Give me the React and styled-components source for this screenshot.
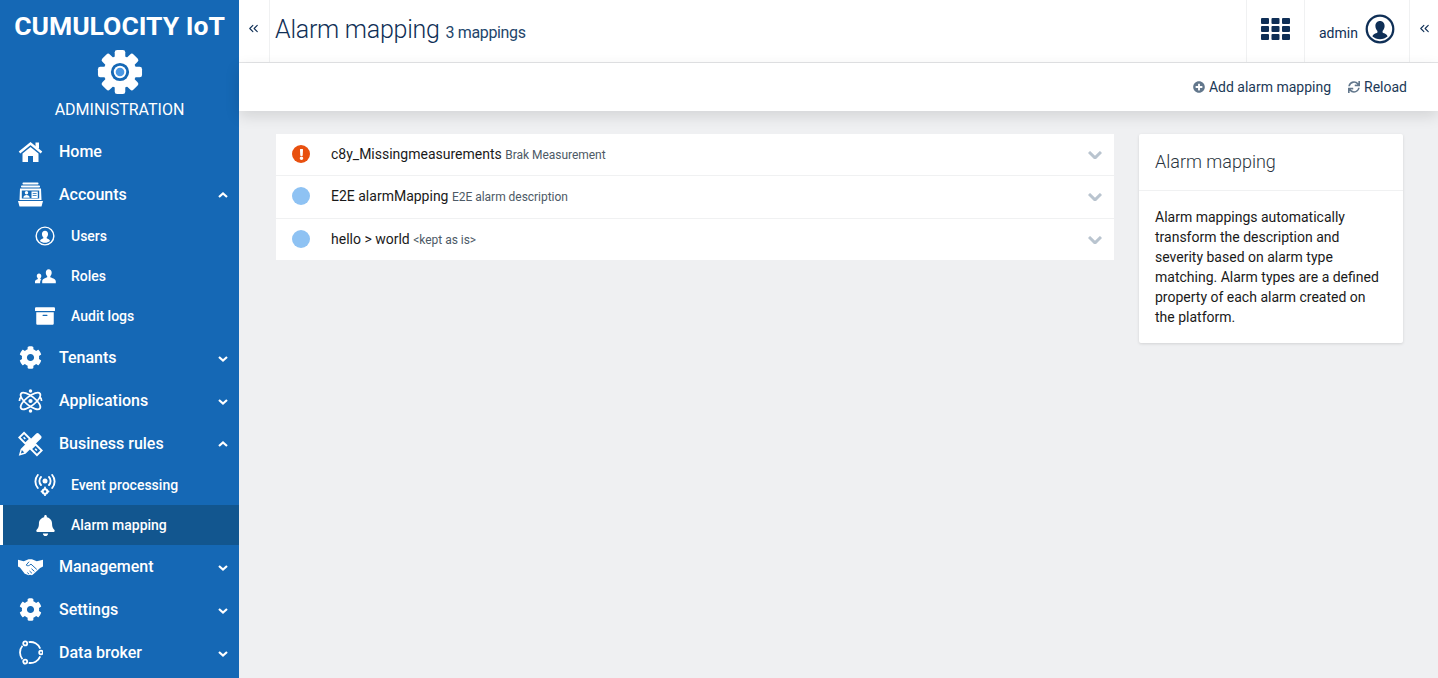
import React from 'react'
import styled, { createGlobalStyle } from 'styled-components'
import { FaCog, FaBell, FaArchive, FaPlusCircle, FaSync, FaExclamation } from 'react-icons/fa'
import { ChevronsLeft } from 'lucide-react'

const GlobalStyle = createGlobalStyle`
  html, body { margin: 0; padding: 0; height: 100%; overflow: hidden; }
  body { font-family: Roboto, "Liberation Sans", sans-serif; background: #eff0f2; }
  * { box-sizing: border-box; }
`

// hand drawn icons, the packages don't have these
const LogoGear = () => (
  <svg width="46" height="46" viewBox="0 0 48 48">
    {[0, 45, 90, 135, 180, 225, 270, 315].map((a) => (
      <rect key={a} x="18.5" y="1" width="11" height="12" rx="2.5" fill="#fff" transform={`rotate(${a} 24 24)`} />
    ))}
    <circle cx="24" cy="24" r="17" fill="#fff" />
    <circle cx="24" cy="24" r="9.5" fill="#1568b5" />
    <circle cx="24" cy="24" r="6.5" fill="#fff" />
    <circle cx="24" cy="24" r="4.5" fill="#4a98e4" />
  </svg>
)

const Chevron = ({ width = 10, weight = 2.2, up }) => {
  const h = width * 0.6
  const points = up
    ? `M1 ${h - 1}L${width / 2} 1.500L${width - 1} ${h - 1}`
    : `M1 1L${width / 2} ${h - 1.500}L${width - 1} 1`
  return (
    <svg width={width} height={h} viewBox={`0 0 ${width} ${h}`} fill="none" stroke="currentColor" strokeWidth={weight}>
      <path d={points} />
    </svg>
  )
}

const HomeIcon = () => (
  <svg width="25" height="22" viewBox="0 0 25 22" fill="#fff">
    <rect x="17.5" y="1.5" width="3.5" height="6" />
    <path d="M1.5 11.5l11-9 11 9" fill="none" stroke="#fff" strokeWidth="2.4" />
    <path d="M4.5 12.500l8-6.500 8 6.500V21h-5.500v-6h-5v6H4.500z" />
  </svg>
)

const AccountsIcon = () => (
  <svg width="25" height="25" viewBox="0 0 25 25" fill="#fff">
    <rect x="4.500" y="0.500" width="16" height="2" rx="0.800" />
    <rect x="3" y="3.500" width="19" height="2" rx="0.800" />
    <path fillRule="evenodd" d="M2 6.500h21l.5 11.500H1.500zM3.800 8.500v8h17.400v-8z" />
    <circle cx="8.500" cy="10.800" r="1.700" />
    <path d="M5.300 15.800c.1-2 1.500-2.800 3.200-2.800s3.100.8 3.200 2.800z" />
    <path fillRule="evenodd" d="M13.500 9.500h6.300v6.500h-6.300zM14.700 11v.8h3.900V11zm0 2v.8h3.900V13z" />
    <path d="M0 19h25l-1.500 5.500h-22z" />
  </svg>
)

const AtomIcon = () => (
  <svg width="26" height="26" viewBox="0 0 26 26" fill="none" stroke="#fff" strokeWidth="1.800">
    <ellipse cx="13" cy="13" rx="12.500" ry="4.800" transform="rotate(38 13 13)" />
    <ellipse cx="13" cy="13" rx="12.500" ry="4.800" transform="rotate(-38 13 13)" />
    <path d="M1.500 13c0-1.500.5-3 1.500-4M24.500 13c0-1.500-.5-3-1.500-4" />
    <circle cx="13" cy="13" r="2.200" fill="#fff" stroke="none" />
    <circle cx="13" cy="2.500" r="1.800" fill="#fff" stroke="none" />
    <circle cx="13" cy="23.500" r="1.800" fill="#fff" stroke="none" />
  </svg>
)

const BusinessIcon = () => (
  <svg width="26" height="26" viewBox="0 0 26 26" fill="#fff">
    <g fill="none" stroke="#fff" strokeWidth="2">
      <rect x="2.500" y="3.500" width="9" height="7" transform="rotate(45 7 7)" />
      <rect x="14.500" y="15.500" width="9" height="7" transform="rotate(45 19 19)" />
    </g>
    <rect x="5.500" y="6.300" width="2.500" height="1.600" transform="rotate(45 7 7)" />
    <rect x="17.500" y="18.300" width="2.500" height="1.600" transform="rotate(45 19 19)" />
    <path d="M.8 25.200l2-7L19 2.200c.8-.8 1.800-.8 2.500 0l2.500 2.500c.7.700.7 1.700 0 2.500L7.800 23.200z" />
    <path d="M3 22.800l1-3.500 2.500 2.500z" fill="#1568b5" />
  </svg>
)

const HandshakeIcon = () => (
  <svg width="26" height="18" viewBox="0 0 26 18">
    <path
      fill="#fff"
      d="M0 1.500l6 1.500 5-2h3.500l5 2 6.500-1.500v7l-3 1.500-6.500 6-2 1.500-2-.5-1.500.5-2.500-1-1.500-.5-2-2.500-3-4-2-1z"
    />
    <path
      fill="none"
      stroke="#1568b5"
      strokeWidth="1"
      d="M11.500 3.500L8.500 7c1.500 1.200 3 .8 5-1l6 5.500M17 13.500l-3-2.700M14.500 15.500l-2.500-2.300M11.500 16.500l-1.800-1.700"
    />
  </svg>
)

const UserCircleIcon = ({ size = 20, color = '#fff', stroke = 2 }) => (
  <svg width={size} height={size} viewBox="0 0 28 28" fill={color}>
    <circle cx="14" cy="14" r="12.4" fill="none" stroke={color} strokeWidth={stroke} />
    <path d="M14 6.500c2.700 0 4.300 2 4.300 4.700 0 2-.9 3.600-1.900 4.600v1.500c1.600 1.100 4.400 1.400 4.600 3.700-1.800 1.500-4.200 2.500-7 2.500s-5.200-1-7-2.500c.2-2.300 3-2.600 4.600-3.700v-1.500c-1-1-1.900-2.600-1.900-4.600 0-2.700 1.600-4.700 4.300-4.700z" />
  </svg>
)

const RolesIcon = () => (
  <svg width="21" height="15" viewBox="0 0 21 15" fill="#fff">
    <path d="M13.500.300c2 0 3.200 1.500 3.200 3.500 0 1.500-.7 2.700-1.400 3.400v1.100c1.500.9 5.200 1.300 5.500 3.700v2.300H7.200v-2.300c.3-2.400 3.500-2.800 5-3.700V7.200c-.7-.7-1.400-1.900-1.400-3.400 0-2 1.200-3.500 2.700-3.500z" />
    <path d="M4 4.500c1.400 0 2.300 1.100 2.300 2.500 0 1-.5 1.900-1 2.400v.7c.3.200.7.400 1 .5-.7.600-1.100 1.400-1.200 2.400v1.300H0v-2c.2-1.600 2-1.800 2.800-2.400v-.6c-.5-.5-1-1.400-1-2.300 0-1.400.8-2.500 2.200-2.500z" />
  </svg>
)

const EventIcon = () => (
  <svg width="22" height="22" viewBox="0 0 22 22" fill="none" stroke="#fff" strokeWidth="1.900" strokeLinecap="round">
    <circle cx="11" cy="7" r="2.500" fill="#fff" stroke="none" />
    <path d="M7 3a5.800 5.800 0 0 0 0 8M15 3a5.800 5.800 0 0 1 0 8" />
    <path d="M3.800 1a10 10 0 0 0 0 13M18.200 1a10 10 0 0 1 0 13" />
    <circle cx="11" cy="17.500" r="2.300" strokeWidth="2" />
    <path d="M11 13.500v1M11 20.700v.6M7.500 17.500h.5M14 17.500h.5" strokeWidth="1.800" />
  </svg>
)

const arc = (from, to) => {
  const pt = (a) => [12.5 + 10.5 * Math.cos((a * Math.PI) / 180), 12.5 + 10.5 * Math.sin((a * Math.PI) / 180)]
  const [x1, y1] = pt(from)
  const [x2, y2] = pt(to)
  return `M${x1} ${y1}A10.500 10.500 0 0 1 ${x2} ${y2}`
}

const BrokerIcon = () => (
  <svg width="25" height="25" viewBox="0 0 25 25" fill="none" stroke="#fff" strokeWidth="1.800">
    <path d={arc(-100, -22)} />
    <path d={arc(22, 100)} />
    <path d={arc(140, 220)} />
    <circle cx="7.200" cy="3.400" r="2" />
    <circle cx="23" cy="12.500" r="1.800" />
    <circle cx="7.200" cy="21.600" r="2" />
  </svg>
)

const GridIcon = () => (
  <svg width="29" height="22" viewBox="0 0 29 22" fill="#0f2f56">
    {[0, 8, 16].map((y) =>
      [0, 10.500, 21].map((x) => <rect key={`${x}-${y}`} x={x} y={y} width="8" height="6" rx="1" />)
    )}
  </svg>
)

const MENU = [
  { label: 'Home', icon: <HomeIcon /> },
  {
    label: 'Accounts', icon: <AccountsIcon />, open: true,
    children: [
      { label: 'Users', icon: <UserCircleIcon /> },
      { label: 'Roles', icon: <RolesIcon /> },
      { label: 'Audit logs', icon: <FaArchive size={20} /> },
    ],
  },
  { label: 'Tenants', icon: <FaCog size={23} />, closed: true },
  { label: 'Applications', icon: <AtomIcon />, closed: true },
  {
    label: 'Business rules', icon: <BusinessIcon />, open: true,
    children: [
      { label: 'Event processing', icon: <EventIcon /> },
      { label: 'Alarm mapping', icon: <FaBell size={21} />, active: true },
    ],
  },
  { label: 'Management', icon: <HandshakeIcon />, closed: true },
  { label: 'Settings', icon: <FaCog size={23} />, closed: true },
  { label: 'Data broker', icon: <BrokerIcon />, closed: true },
]

const MAPPINGS = [
  { name: 'c8y_Missingmeasurements', desc: 'Brak Measurement', critical: true, height: 42, pad: 1 },
  { name: 'E2E alarmMapping', desc: 'E2E alarm description', height: 43, pad: 2 },
  { name: 'hello > world', desc: '<kept as is>', height: 41, pad: 1 },
]

export default function App() {
  return (
    <Page>
      <GlobalStyle />
      <Sidebar>
        <Brand>
          <BrandName>CUMULOCITY IoT</BrandName>
          <LogoGear />
          <AppName>ADMINISTRATION</AppName>
        </Brand>
        <nav>
          {MENU.map((item) => (
            <React.Fragment key={item.label}>
              <NavItem>
                <NavIcon>{item.icon}</NavIcon>
                <span>{item.label}</span>
                {item.open && <Caret><Chevron up /></Caret>}
                {item.closed && <Caret $down><Chevron /></Caret>}
              </NavItem>
              {item.children && item.children.map((sub) => (
                <SubItem key={sub.label} $active={sub.active}>
                  <SubIcon>{sub.icon}</SubIcon>
                  <span>{sub.label}</span>
                </SubItem>
              ))}
            </React.Fragment>
          ))}
        </nav>
      </Sidebar>

      <Main>
        <TopBar>
          <CollapseLeft><ChevronsLeft size={15} strokeWidth={1.800} /></CollapseLeft>
          <Title>Alarm mapping <small>3 mappings</small></Title>
          <AppsButton><GridIcon /></AppsButton>
          <UserButton>
            <UserName>admin</UserName>
            <UserCircleIcon size={30} color="#0f2f56" stroke={2.100} />
          </UserButton>
          <CollapseRight><ChevronsLeft size={15} strokeWidth={1.800} /></CollapseRight>
        </TopBar>

        <ActionBar>
          <Action><FaPlusCircle size={12} /><span>Add alarm mapping</span></Action>
          <Action><FaSync size={12} /><span>Reload</span></Action>
        </ActionBar>

        <Content>
          <List>
            {MAPPINGS.map((m) => (
              <Row key={m.name} $height={m.height} $pad={m.pad}>
                <Severity $critical={m.critical}>
                  {m.critical && <FaExclamation size={11} />}
                </Severity>
                <RowName>{m.name}</RowName>
                <RowDesc>{m.desc}</RowDesc>
                <RowCaret><Chevron width={14} weight={3} /></RowCaret>
              </Row>
            ))}
          </List>
          <Card>
            <CardTitle>Alarm mapping</CardTitle>
            <CardBody>
              Alarm mappings automatically transform the description and severity based on alarm
              type matching. Alarm types are a defined property of each alarm created on the platform.
            </CardBody>
          </Card>
        </Content>
      </Main>
    </Page>
  )
}

const Page = styled.div`
  display: flex;
  height: 678px;
  width: 1438px;
  overflow: hidden;
`

const Sidebar = styled.aside`
  width: 239px;
  flex: none;
  background: #1568b5;
  color: #fff;
`

const Brand = styled.div`
  height: 130px;
  padding-top: 11px;
  display: flex;
  flex-direction: column;
  align-items: center;
`

const BrandName = styled.div`
  font-size: 26.5px;
  line-height: 30px;
  font-weight: 700;
  white-space: nowrap;
  margin-bottom: 8px;
`

const AppName = styled.div`
  font-size: 16px;
  line-height: 20px;
  font-weight: 400;
  margin-top: 5px;
`

const NavItem = styled.div`
  height: 43px;
  display: flex;
  align-items: center;
  padding: 0 11px 0 18px;
  font-size: 16px;
  font-weight: 500;
`

const NavIcon = styled.div`
  width: 25px;
  margin-right: 16px;
  display: flex;
  justify-content: center;
`

const Caret = styled.div`
  margin-left: auto;
  display: flex;
  margin-top: ${(p) => (p.$down ? '3px' : '0')};
`

const SubItem = styled.div`
  height: 40px;
  display: flex;
  align-items: center;
  padding-left: ${(p) => (p.$active ? '30px' : '33px')};
  font-size: 14px;
  font-weight: 500;
  background: ${(p) => (p.$active ? '#12568f' : 'transparent')};
  border-left: ${(p) => (p.$active ? '3px solid #fff' : '0')};
`

const SubIcon = styled.div`
  width: 24px;
  margin-right: 14px;
  display: flex;
  justify-content: center;
`

const Main = styled.main`
  flex: 1;
  min-width: 0;
  display: flex;
  flex-direction: column;
`

const TopBar = styled.header`
  height: 63px;
  flex: none;
  background: #fff;
  display: flex;
  align-items: stretch;
  border-bottom: 1px solid #e4e5e7;
  color: #0f2f56;
`

const CollapseLeft = styled.div`
  width: 31px;
  border-right: 1px solid #f0f1f2;
  display: flex;
  align-items: center;
  justify-content: center;
  padding: 0 2px 6px 0;
`

const CollapseRight = styled.div`
  width: 29px;
  border-left: 1px solid #f0f1f2;
  display: flex;
  align-items: center;
  justify-content: center;
  padding-bottom: 6px;
`

const Title = styled.h1`
  margin: 0 auto 0 0;
  padding: 13px 0 0 5px;
  font-size: 25px;
  line-height: 34px;
  font-weight: 300;
  letter-spacing: -0.25px;
  white-space: nowrap;

  small {
    font-size: 16px;
    font-weight: 400;
    letter-spacing: -0.35px;
    color: #23456b;
  }
`

const AppsButton = styled.div`
  width: 58px;
  border-left: 1px solid #f0f1f2;
  display: flex;
  align-items: center;
  justify-content: center;
  padding-bottom: 4px;
`

const UserButton = styled.div`
  width: 105px;
  border-left: 1px solid #f0f1f2;
  display: flex;
  align-items: center;
  padding: 0 0 4px 14px;
  gap: 7px;
  font-size: 14px;
`

const UserName = styled.span`
  padding-top: 7px;
`

const ActionBar = styled.div`
  height: 48px;
  flex: none;
  background: #fff;
  display: flex;
  justify-content: flex-end;
  align-items: center;
  gap: 17px;
  padding-right: 31px;
  box-shadow: 0 5px 14px rgba(0, 0, 0, 0.12);
  position: relative;
`

const Action = styled.div`
  display: flex;
  align-items: center;
  gap: 4px;
  font-size: 14px;
  color: #1c3957;

  svg { color: #62778c; }
`

const Content = styled.div`
  flex: 1;
  display: flex;
  align-items: flex-start;
  gap: 25px;
  padding: 23px 35px 0 37px;
`

const List = styled.div`
  width: 838px;
  background: #fff;
`

const Row = styled.div`
  height: ${(p) => p.$height}px;
  display: flex;
  align-items: center;
  padding: 0 12px ${(p) => p.$pad}px 16px;
  border-bottom: 1px solid #f0f1f2;

  &:last-child { border-bottom: 0; }
`

const Severity = styled.div`
  width: 18px;
  height: 18px;
  border-radius: 50%;
  background: ${(p) => (p.$critical ? '#e8500f' : '#8ec2f3')};
  color: #fff;
  display: flex;
  align-items: center;
  justify-content: center;
  margin-right: 21px;
`

const RowName = styled.span`
  font-size: 14px;
  color: #1a1a1a;
  margin-right: 3.5px;
`

const RowDesc = styled.span`
  font-size: 12px;
  letter-spacing: -0.03px;
  padding-top: 2px;
  color: #4d5a66;
`

const RowCaret = styled.div`
  margin-left: auto;
  display: flex;
  margin-top: 2px;
  color: #b9c4cf;
`

const Card = styled.section`
  width: 264px;
  flex: none;
  background: #fff;
  border-radius: 2px;
  box-shadow: 0 1px 3px rgba(0, 0, 0, 0.12);
`

const CardTitle = styled.h2`
  margin: 0;
  height: 57px;
  padding: 0 16px 2px;
  display: flex;
  align-items: center;
  font-size: 18px;
  font-weight: 300;
  color: #2a3440;
  border-bottom: 1px solid #f0f1f2;
`

const CardBody = styled.p`
  margin: 0;
  padding: 16px 16px 16px;
  font-size: 14px;
  line-height: 20px;
  color: #1a1a1a;
`
